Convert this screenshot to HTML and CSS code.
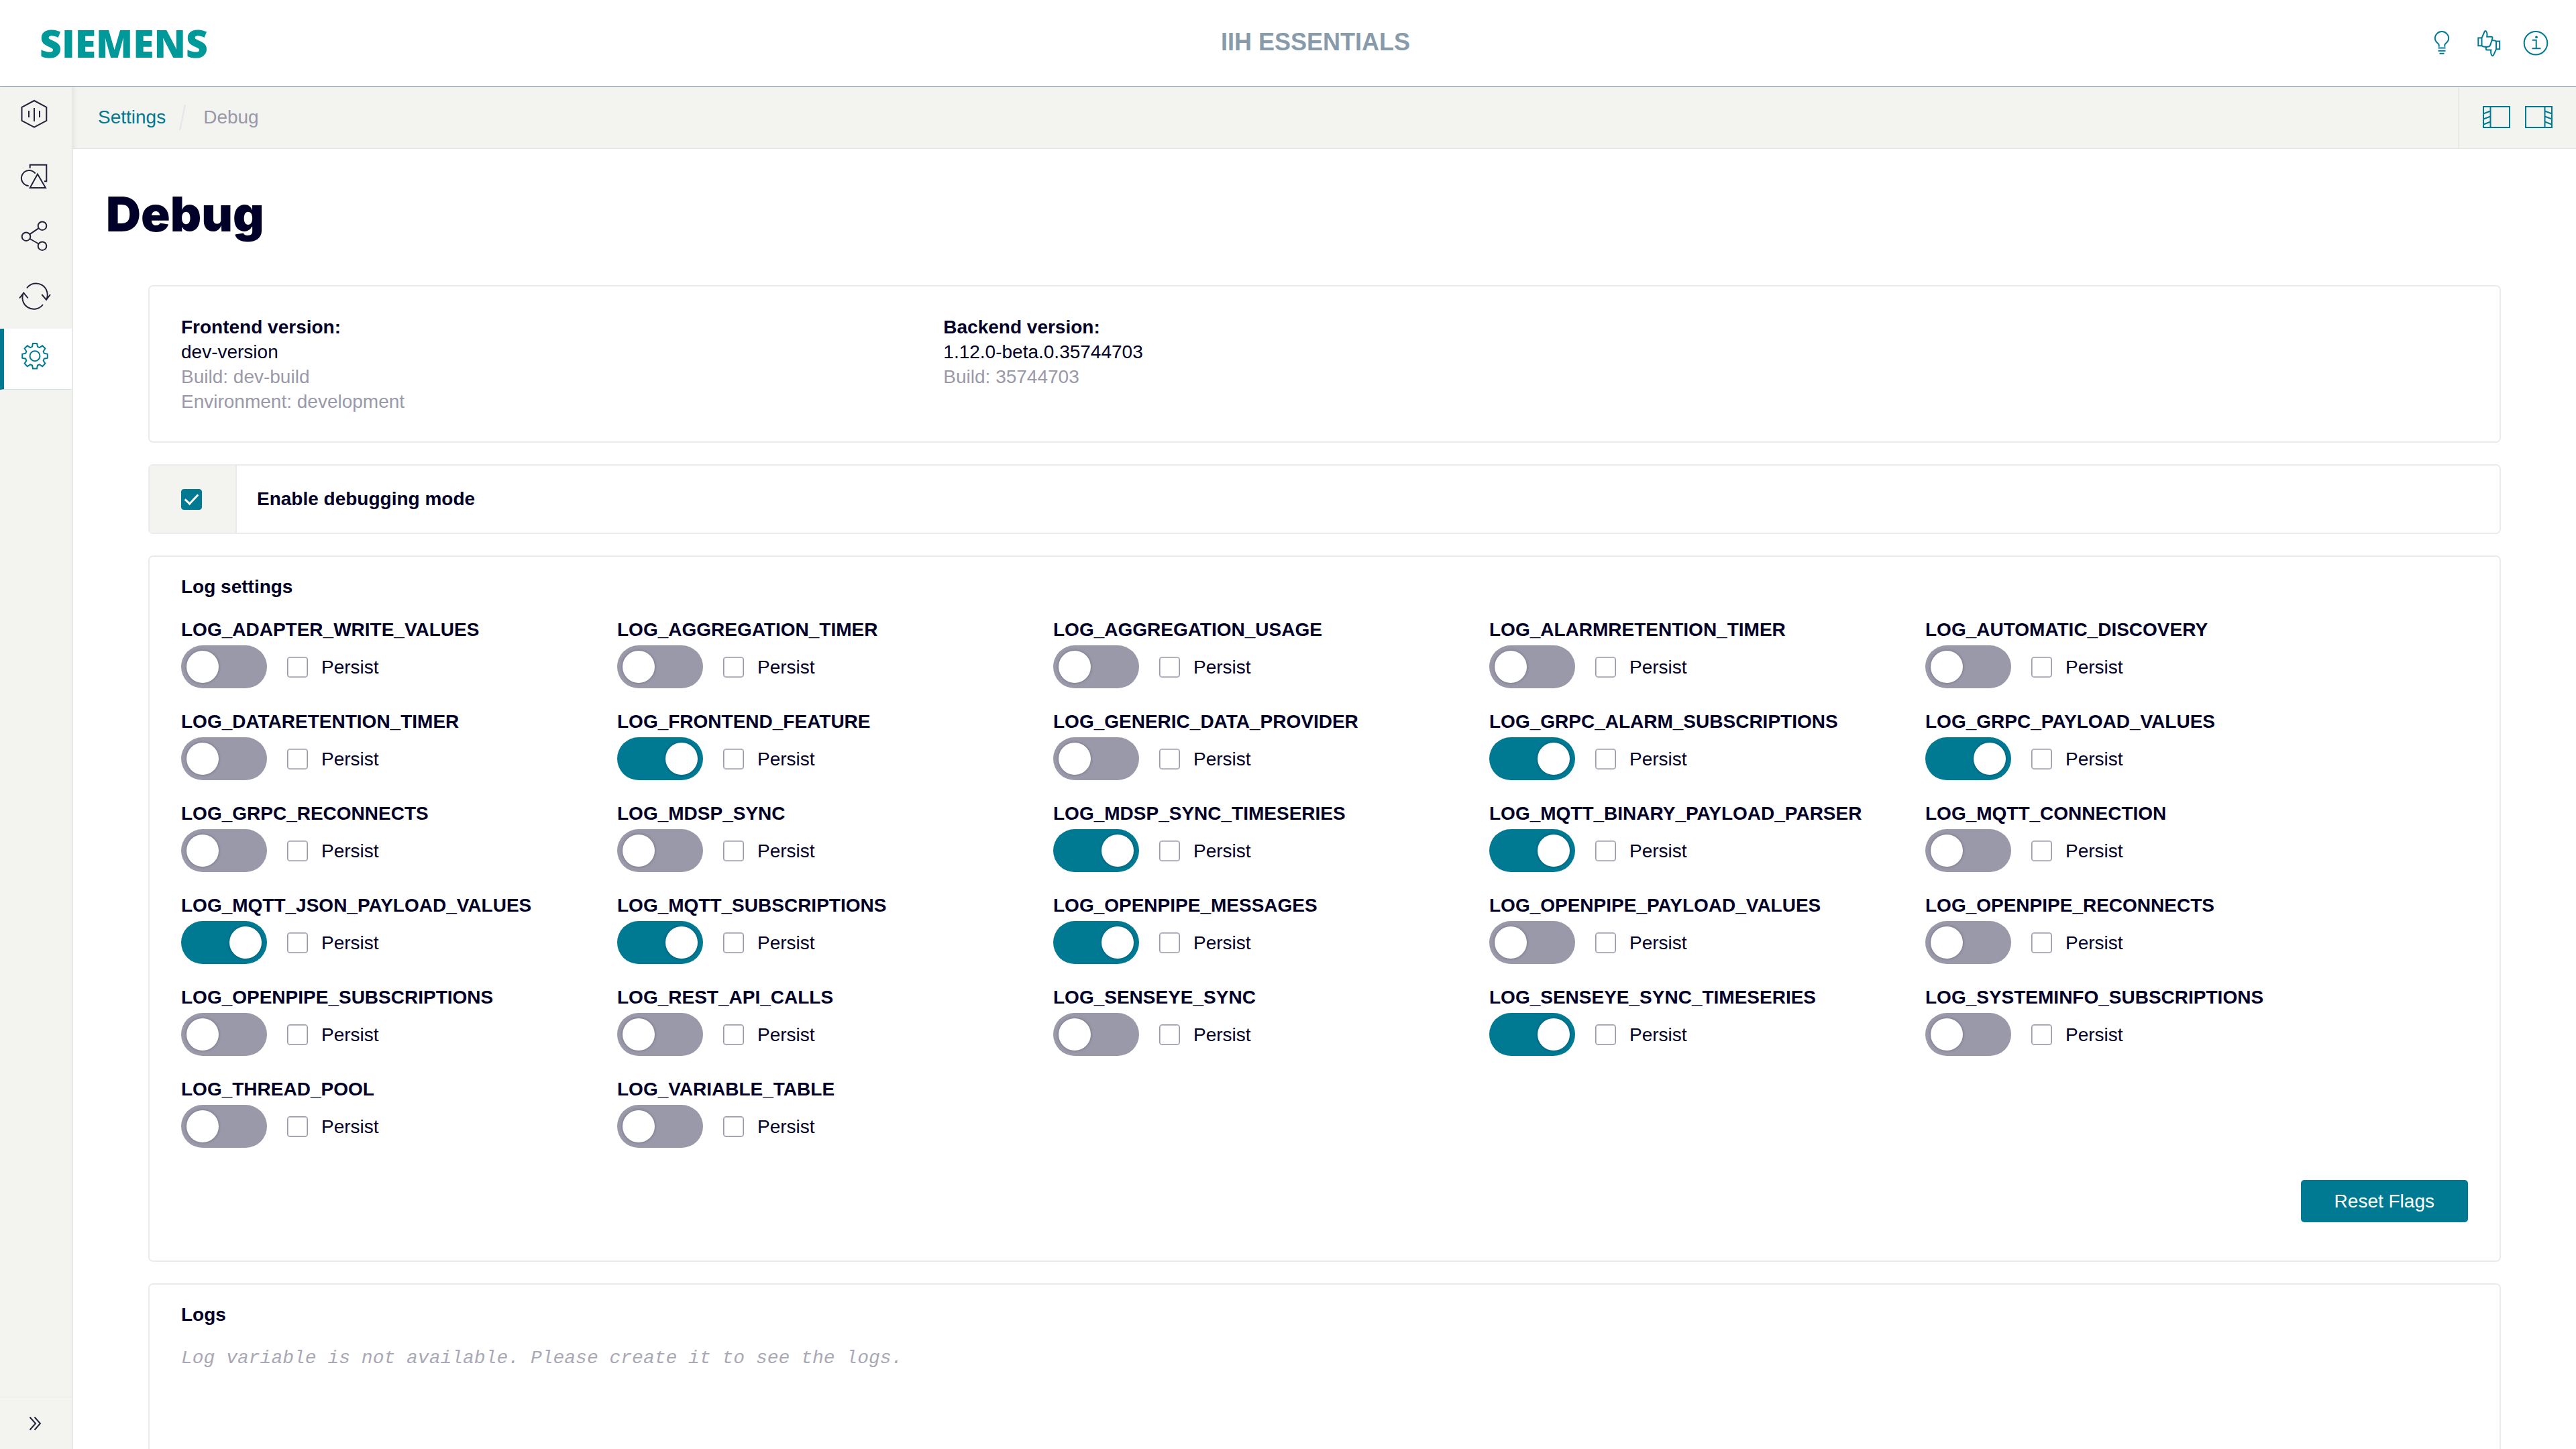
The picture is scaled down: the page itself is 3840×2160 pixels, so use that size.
FILE: index.html
```html
<!DOCTYPE html>
<html lang="en">
<head>
<meta charset="utf-8">
<title>IIH Essentials - Debug</title>
<link rel="stylesheet" href="styles.css">
</head>
<body>
<header class="header">
  <div class="logo">SIEMENS</div>
  <div class="app-title">IIH ESSENTIALS</div>
  <div class="header-actions">
    <button class="icon-button" type="button" aria-label="Tips">
      <svg class="icon-lg" viewBox="0 0 56 56"><path d="M23.7 33.7V31C23.7 29 17.8 27 17.8 21.3a10.2 10.2 0 0 1 20.4 0C38.200 27 32.300 29 32.300 31V33.700M22.500 35.500H33.500M22.500 39.700H33.500M24.500 43.700H31.500"/></svg>
    </button>
    <button class="icon-button" type="button" aria-label="Feedback">
      <svg class="icon-lg" viewBox="0 0 56 56"><path d="M12.300 20.600H17.500V32.300H12.300ZM17.500 20.600L21.500 11.500Q22.800 8.500 24.500 11.500C26.300 14 25.500 16 25.200 18.800H31.500Q34.300 18.800 33.300 21.500L30.500 30.500Q29.500 33.700 26.500 33.700H21.500Q19 33.700 17.500 32.300M44.200 25.600H39V37.300H44.200ZM33 24.300H35.500Q37.500 24.300 39 25.600M39 37.300L35 46.300Q33.500 48.500 32.300 46C30.500 44 31 41 31.300 38.600H25.500Q23 38.600 24.200 34.500"/></svg>
    </button>
    <button class="icon-button" type="button" aria-label="Information">
      <svg class="icon-lg" viewBox="0 0 56 56"><circle cx="28" cy="28.300" r="17.300"/><path d="M22.800 23.700H28.700V36.300M22.500 36.300H35.500"/><circle class="dot" cx="29" cy="19.300" r="1.900"/></svg>
    </button>
  </div>
</header>

<div class="body">
  <nav class="sidebar" aria-label="Main">
    <a class="nav-item" href="#" aria-label="Overview">
      <svg class="icon" viewBox="0 0 48 48"><path d="M24 4L42.300 13.900V34L24 43.700L5.500 34V13.900ZM16 19V29M24 15V35M32 19V29"/></svg>
    </a>
    <a class="nav-item" href="#" aria-label="Assets">
      <svg class="icon" viewBox="0 0 48 48"><path d="M17.700 14.800V9.700H42.300V34.300H39M25.700 22.700A11.500 11.500 0 1 0 15.700 41M29 23.500L17.700 44H41Z"/></svg>
    </a>
    <a class="nav-item" href="#" aria-label="Share">
      <svg class="icon" viewBox="0 0 48 48"><circle cx="36" cy="10.700" r="6.300"/><circle cx="12" cy="26.700" r="6.300"/><circle cx="36" cy="40.700" r="6.300"/><path d="M17.500 23.200L30.700 14.200M17.500 30L30.700 37.500"/></svg>
    </a>
    <a class="nav-item" href="#" aria-label="Synchronize">
      <svg class="icon" viewBox="0 0 48 48"><path d="M13 13.500A17 17 0 0 1 42 31M35.300 23L42 31L48 23M37 38A17 17 0 0 1 8.300 20M2 28.500L8.300 20.500L14.700 28.500"/></svg>
    </a>
    <a class="nav-item active" href="#" aria-label="Settings" aria-current="page">
      <svg class="icon" viewBox="0 0 48 48"><g transform="translate(25 24.700)"><circle r="7.500"/><path d="M-4-13.800L-3-18.800H3L4-13.800L6.900-12.600L11.200-15.400L15.400-11.200L12.600-6.900L13.800-4L18.800-3V3L13.800 4L12.600 6.900L15.400 11.200L11.200 15.400L6.900 12.600L4 13.800L3 18.800H-3L-4 13.800L-6.900 12.600L-11.200 15.400L-15.400 11.200L-12.600 6.900L-13.800 4L-18.800 3V-3L-13.800-4L-12.600-6.900L-15.400-11.200L-11.200-15.400L-6.900-12.600Z"/></g></svg>
    </a>
    <button class="expand" type="button" aria-label="Expand navigation">
      <svg class="icon" viewBox="0 0 48 48"><path d="M17.500 14.500L26 24L17.500 33.500M24.500 14.500L33 24L24.500 33.500"/></svg>
    </button>
  </nav>

  <div class="page">
    <div class="toolbar">
      <nav class="breadcrumb" aria-label="Breadcrumb">
        <a href="#">Settings</a>
        <svg class="slash" viewBox="0 0 10 40"><path d="M9 1L1 39"/></svg>
        <span>Debug</span>
      </nav>
      <div class="panel-actions">
        <button class="icon-button" type="button" aria-label="Toggle left panel">
          <svg class="icon-panel" viewBox="0 0 41 33"><path d="M1 1H40V32H1ZM11.500 1V32M1 11.500L11.500 7.500M1 19.500L11.500 15.500M1 27.500L11.500 23.500"/></svg>
        </button>
        <button class="icon-button" type="button" aria-label="Toggle right panel">
          <svg class="icon-panel" viewBox="0 0 41 33"><path d="M1 1H40V32H1ZM29.500 1V32M40 11.500L29.500 7.500M40 19.500L29.500 15.500M40 27.500L29.500 23.500"/></svg>
        </button>
      </div>
    </div>

    <main class="content">
      <h1>Debug</h1>

      <section class="card versions">
        <div>
          <strong>Frontend version:</strong>
          <p>dev-version</p>
          <p class="muted">Build: dev-build</p>
          <p class="muted">Environment: development</p>
        </div>
        <div>
          <strong>Backend version:</strong>
          <p>1.12.0-beta.0.35744703</p>
          <p class="muted">Build: 35744703</p>
        </div>
      </section>

      <section class="card debug-mode">
        <div class="debug-check"><input class="tick" id="debug-mode" type="checkbox" checked></div>
        <label for="debug-mode">Enable debugging mode</label>
      </section>

      <section class="card panel">
        <h2>Log settings</h2>
        <div class="flags">
          <div class="flag"><label for="f1">LOG_ADAPTER_WRITE_VALUES</label><div class="flag-row"><input class="toggle" id="f1" type="checkbox"><label class="persist"><input class="tick" type="checkbox">Persist</label></div></div>
          <div class="flag"><label for="f2">LOG_AGGREGATION_TIMER</label><div class="flag-row"><input class="toggle" id="f2" type="checkbox"><label class="persist"><input class="tick" type="checkbox">Persist</label></div></div>
          <div class="flag"><label for="f3">LOG_AGGREGATION_USAGE</label><div class="flag-row"><input class="toggle" id="f3" type="checkbox"><label class="persist"><input class="tick" type="checkbox">Persist</label></div></div>
          <div class="flag"><label for="f4">LOG_ALARMRETENTION_TIMER</label><div class="flag-row"><input class="toggle" id="f4" type="checkbox"><label class="persist"><input class="tick" type="checkbox">Persist</label></div></div>
          <div class="flag"><label for="f5">LOG_AUTOMATIC_DISCOVERY</label><div class="flag-row"><input class="toggle" id="f5" type="checkbox"><label class="persist"><input class="tick" type="checkbox">Persist</label></div></div>
          <div class="flag"><label for="f6">LOG_DATARETENTION_TIMER</label><div class="flag-row"><input class="toggle" id="f6" type="checkbox"><label class="persist"><input class="tick" type="checkbox">Persist</label></div></div>
          <div class="flag"><label for="f7">LOG_FRONTEND_FEATURE</label><div class="flag-row"><input class="toggle" id="f7" type="checkbox" checked><label class="persist"><input class="tick" type="checkbox">Persist</label></div></div>
          <div class="flag"><label for="f8">LOG_GENERIC_DATA_PROVIDER</label><div class="flag-row"><input class="toggle" id="f8" type="checkbox"><label class="persist"><input class="tick" type="checkbox">Persist</label></div></div>
          <div class="flag"><label for="f9">LOG_GRPC_ALARM_SUBSCRIPTIONS</label><div class="flag-row"><input class="toggle" id="f9" type="checkbox" checked><label class="persist"><input class="tick" type="checkbox">Persist</label></div></div>
          <div class="flag"><label for="f10">LOG_GRPC_PAYLOAD_VALUES</label><div class="flag-row"><input class="toggle" id="f10" type="checkbox" checked><label class="persist"><input class="tick" type="checkbox">Persist</label></div></div>
          <div class="flag"><label for="f11">LOG_GRPC_RECONNECTS</label><div class="flag-row"><input class="toggle" id="f11" type="checkbox"><label class="persist"><input class="tick" type="checkbox">Persist</label></div></div>
          <div class="flag"><label for="f12">LOG_MDSP_SYNC</label><div class="flag-row"><input class="toggle" id="f12" type="checkbox"><label class="persist"><input class="tick" type="checkbox">Persist</label></div></div>
          <div class="flag"><label for="f13">LOG_MDSP_SYNC_TIMESERIES</label><div class="flag-row"><input class="toggle" id="f13" type="checkbox" checked><label class="persist"><input class="tick" type="checkbox">Persist</label></div></div>
          <div class="flag"><label for="f14">LOG_MQTT_BINARY_PAYLOAD_PARSER</label><div class="flag-row"><input class="toggle" id="f14" type="checkbox" checked><label class="persist"><input class="tick" type="checkbox">Persist</label></div></div>
          <div class="flag"><label for="f15">LOG_MQTT_CONNECTION</label><div class="flag-row"><input class="toggle" id="f15" type="checkbox"><label class="persist"><input class="tick" type="checkbox">Persist</label></div></div>
          <div class="flag"><label for="f16">LOG_MQTT_JSON_PAYLOAD_VALUES</label><div class="flag-row"><input class="toggle" id="f16" type="checkbox" checked><label class="persist"><input class="tick" type="checkbox">Persist</label></div></div>
          <div class="flag"><label for="f17">LOG_MQTT_SUBSCRIPTIONS</label><div class="flag-row"><input class="toggle" id="f17" type="checkbox" checked><label class="persist"><input class="tick" type="checkbox">Persist</label></div></div>
          <div class="flag"><label for="f18">LOG_OPENPIPE_MESSAGES</label><div class="flag-row"><input class="toggle" id="f18" type="checkbox" checked><label class="persist"><input class="tick" type="checkbox">Persist</label></div></div>
          <div class="flag"><label for="f19">LOG_OPENPIPE_PAYLOAD_VALUES</label><div class="flag-row"><input class="toggle" id="f19" type="checkbox"><label class="persist"><input class="tick" type="checkbox">Persist</label></div></div>
          <div class="flag"><label for="f20">LOG_OPENPIPE_RECONNECTS</label><div class="flag-row"><input class="toggle" id="f20" type="checkbox"><label class="persist"><input class="tick" type="checkbox">Persist</label></div></div>
          <div class="flag"><label for="f21">LOG_OPENPIPE_SUBSCRIPTIONS</label><div class="flag-row"><input class="toggle" id="f21" type="checkbox"><label class="persist"><input class="tick" type="checkbox">Persist</label></div></div>
          <div class="flag"><label for="f22">LOG_REST_API_CALLS</label><div class="flag-row"><input class="toggle" id="f22" type="checkbox"><label class="persist"><input class="tick" type="checkbox">Persist</label></div></div>
          <div class="flag"><label for="f23">LOG_SENSEYE_SYNC</label><div class="flag-row"><input class="toggle" id="f23" type="checkbox"><label class="persist"><input class="tick" type="checkbox">Persist</label></div></div>
          <div class="flag"><label for="f24">LOG_SENSEYE_SYNC_TIMESERIES</label><div class="flag-row"><input class="toggle" id="f24" type="checkbox" checked><label class="persist"><input class="tick" type="checkbox">Persist</label></div></div>
          <div class="flag"><label for="f25">LOG_SYSTEMINFO_SUBSCRIPTIONS</label><div class="flag-row"><input class="toggle" id="f25" type="checkbox"><label class="persist"><input class="tick" type="checkbox">Persist</label></div></div>
          <div class="flag"><label for="f26">LOG_THREAD_POOL</label><div class="flag-row"><input class="toggle" id="f26" type="checkbox"><label class="persist"><input class="tick" type="checkbox">Persist</label></div></div>
          <div class="flag"><label for="f27">LOG_VARIABLE_TABLE</label><div class="flag-row"><input class="toggle" id="f27" type="checkbox"><label class="persist"><input class="tick" type="checkbox">Persist</label></div></div>
        </div>
        <div class="panel-footer"><button class="primary" type="button">Reset Flags</button></div>
      </section>

      <section class="card panel logs">
        <h2>Logs</h2>
        <p class="log-output">Log variable is not available. Please create it to see the logs.</p>
      </section>
    </main>
  </div>
</div>
</body>
</html>
```
FILE: styles.css
```css
:root {
  --ink: #000028;
  --teal: #007993;
  --muted: #9999a9;
  --sand: #f3f3f0;
  --line: #ebebeb;
}

* { box-sizing: border-box; }

body {
  margin: 0;
  height: 100vh;
  display: flex;
  flex-direction: column;
  overflow: hidden;
  background: #fff;
  color: var(--ink);
  font: 28px/37px "Liberation Sans", Arial, sans-serif;
}

h1, h2, p { margin: 0; }

svg {
  display: block;
  fill: none;
  stroke: currentColor;
  stroke-width: 2;
  overflow: visible;
}

button { font: inherit; border: 0; padding: 0; background: none; cursor: pointer; }

/* Header */
.header {
  flex: none;
  height: 129px;
  padding: 0 32px 0 59px;
  display: flex;
  align-items: center;
  justify-content: space-between;
  border-bottom: 1px solid #879baa;
}

.logo {
  color: #009999;
  font: 800 57px/72px "Open Sans", sans-serif;
}

.app-title {
  padding-bottom: 2px;
  color: #879baa;
  font-size: 36px;
  font-weight: 700;
  line-height: 40px;
}

.header-actions { display: flex; gap: 14px; }
.icon-button { color: var(--teal); }
.icon-lg { width: 56px; height: 56px; }
.dot { fill: currentColor; stroke: none; }

/* Shell */
.body { flex: 1; min-height: 0; display: flex; border-top: 1px solid #dfe3e6; }

.sidebar {
  flex: none;
  width: 109px;
  display: flex;
  flex-direction: column;
  position: relative;
  z-index: 1;
  background: var(--sand);
  border-right: 2px solid #e8e8e8;
  box-shadow: 2px 0 6px rgba(0, 0, 40, 0.06);
}

.nav-item {
  height: 90px;
  padding: 16px 32px 0 27px;
  color: #23233c;
}

.nav-item.active {
  height: 91px;
  padding-left: 21px;
  background: #fff;
  color: var(--teal);
  border-left: 6px solid var(--teal);
  border-bottom: 1px solid #cce4e9;
}

.icon { width: 48px; height: 48px; }

.expand {
  margin-top: auto;
  height: 78px;
  padding: 0 32px 0 27px;
  border-top: 1px solid #eaeae8;
  color: #23233c;
}

.page { flex: 1; min-width: 0; display: flex; flex-direction: column; }

.toolbar {
  flex: none;
  height: 92px;
  display: flex;
  justify-content: space-between;
  background: var(--sand);
  border-bottom: 1px solid #e6e6e6;
}

.breadcrumb {
  display: flex;
  align-items: center;
  padding: 0 0 2px 37px;
  color: var(--muted);
}

.breadcrumb a { color: var(--teal); text-decoration: none; }
.slash { width: 10px; height: 40px; margin: 0 26px 0 20px; color: #e5e5e9; }

.panel-actions {
  display: flex;
  align-items: center;
  gap: 22px;
  padding: 0 35px 2px 35px;
  border-left: 2px solid #e9e9e8;
}

.icon-panel { width: 41px; height: 33px; }

.content {
  flex: 1;
  min-height: 0;
  overflow-y: auto;
  scrollbar-width: none;
  position: relative;
  z-index: 2;
  padding: 57px 112px 32px;
  background: #fff;
}

h1 {
  margin: 0 0 66px -63px;
  font: 900 72px/80px Inter, sans-serif;
}

h2 { font-size: 28px; line-height: 37px; }

/* Cards */
.card {
  margin-bottom: 32px;
  border: 2px solid var(--line);
  border-radius: 7px;
}

.versions {
  display: grid;
  grid-template-columns: repeat(3, 1fr);
  padding: 42px 47px 41px;
}

.versions strong { display: block; }
.muted { color: var(--muted); }

.debug-mode {
  display: flex;
  align-items: center;
  height: 104px;
  font-weight: 700;
}

.debug-mode label { padding-bottom: 2px; }

.debug-check {
  align-self: stretch;
  width: 130px;
  margin-right: 30px;
  padding-left: 47px;
  display: flex;
  align-items: center;
  background: var(--sand);
  border-right: 2px solid var(--line);
}

.panel { padding: 26px 47px 57px; }

.flags {
  display: grid;
  grid-template-columns: repeat(5, 1fr);
  row-gap: 31px;
  margin-top: 27px;
  padding-right: 159px;
}

.flag { font-weight: 700; }
.flag > label { display: block; }

.flag-row {
  display: flex;
  align-items: center;
  gap: 30px;
  margin-top: 5px;
}

.persist { display: flex; align-items: center; gap: 20px; font-weight: 400; }

input { appearance: none; margin: 0; flex: none; }

.tick {
  width: 31px;
  height: 31px;
  border: 1px solid var(--muted);
  border-radius: 4px;
  background: #fff;
  box-shadow: inset 0 0 0 1px #bdbdc8;
}

.tick:checked {
  background: var(--teal);
  border-color: var(--teal);
  box-shadow: none;
}

.tick:checked::before {
  content: "";
  display: block;
  width: 8px;
  height: 17px;
  margin: 2px 0 0 9px;
  border: solid #fff;
  border-width: 0 3px 3px 0;
  transform: rotate(43deg);
}

.toggle {
  display: flex;
  align-items: center;
  width: 128px;
  height: 64px;
  padding: 0 8px;
  border-radius: 32px;
  background: var(--muted);
}

.toggle:checked { justify-content: flex-end; background: var(--teal); }

.toggle::before {
  content: "";
  width: 48px;
  height: 48px;
  border-radius: 50%;
  background: #fff;
  box-shadow: 0 0 4px rgba(0, 0, 40, 0.3);
}

.panel-footer { display: flex; justify-content: flex-end; margin-top: 48px; }

.primary {
  padding: 13px 50px;
  border-radius: 5px;
  background: var(--teal);
  color: #fff;
}

.logs { min-height: 480px; }

.log-output {
  margin-top: 28px;
  color: #a9a9b6;
  font-family: "Liberation Mono", "Courier New", monospace;
  font-style: italic;
}
```
